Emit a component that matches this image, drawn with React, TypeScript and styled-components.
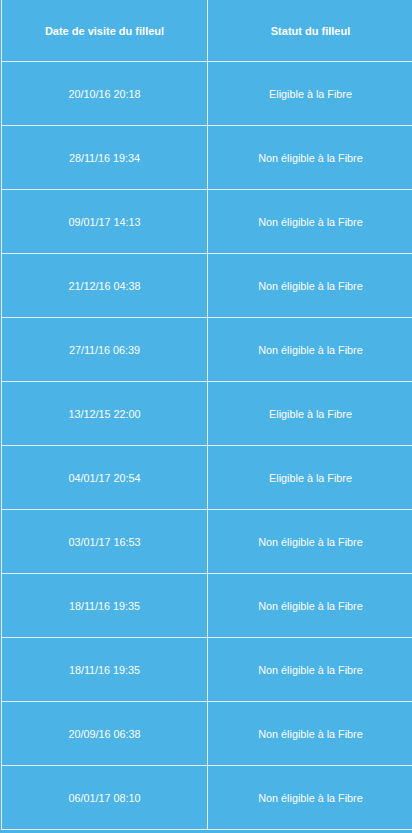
import styled, { createGlobalStyle } from "styled-components";

const GlobalStyle = createGlobalStyle`
  html, body {
    margin: 0;
    padding: 0;
    background-color: #4bb3e5;
    overflow-x: hidden;
  }
`;

const Page = styled.div`
  padding-left: 1px;
  font-family: "Liberation Sans", Arial, Helvetica, sans-serif;
  color: #ffffff;
`;

const Grid = styled.div`
  display: grid;
  grid-template-columns: 205px 205px;
  grid-template-rows: 61px;
  grid-auto-rows: 63px;
  gap: 1px;
  width: max-content;
  padding: 0 1px 1px 1px;
  background-color: #e2edf4;
`;

const Row = styled.div`
  display: contents;
`;

const Cell = styled.div<{ header?: boolean }>`
  display: flex;
  align-items: center;
  justify-content: center;
  background-color: #4bb3e5;
  font-size: ${({ header }) => (header ? "11px" : "10.8px")};
  font-weight: ${({ header }) => (header ? 700 : 400)};
  -webkit-font-smoothing: antialiased;
`;

const visits = [
  { date: "20/10/16 20:18", eligible: true },
  { date: "28/11/16 19:34", eligible: false },
  { date: "09/01/17 14:13", eligible: false },
  { date: "21/12/16 04:38", eligible: false },
  { date: "27/11/16 06:39", eligible: false },
  { date: "13/12/15 22:00", eligible: true },
  { date: "04/01/17 20:54", eligible: true },
  { date: "03/01/17 16:53", eligible: false },
  { date: "18/11/16 19:35", eligible: false },
  { date: "18/11/16 19:35", eligible: false },
  { date: "20/09/16 06:38", eligible: false },
  { date: "06/01/17 08:10", eligible: false },
];

const App = () => {
  return (
    <>
      <GlobalStyle />
      <Page>
        <Grid>
          <Row>
            <Cell header>Date de visite du filleul</Cell>
            <Cell header>Statut du filleul</Cell>
          </Row>
          {visits.map((visit, index) => (
            <Row key={index}>
              <Cell>{visit.date}</Cell>
              <Cell>
                {visit.eligible
                  ? "Eligible à la Fibre"
                  : "Non éligible à la Fibre"}
              </Cell>
            </Row>
          ))}
        </Grid>
      </Page>
    </>
  );
};

export default App;
